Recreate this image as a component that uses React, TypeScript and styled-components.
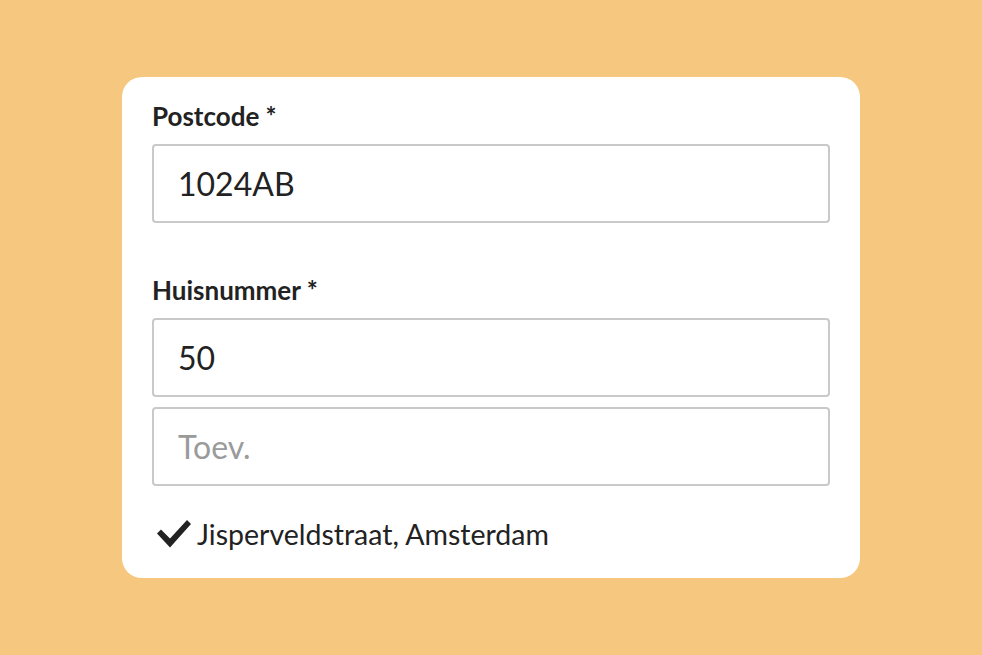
import styled, { createGlobalStyle } from 'styled-components'

const GlobalStyle = createGlobalStyle`
  html, body {
    margin: 0;
    padding: 0;
    background: #f6c77e;
  }
  body {
    font-family: Lato, 'Open Sans', sans-serif;
  }
`

const Page = styled.div`
  width: 982px;
  height: 655px;
  display: flex;
  align-items: center;
  justify-content: center;
  background: #f6c77e;
`

const Card = styled.form`
  width: 738px;
  box-sizing: border-box;
  padding: 23px 30px 27px;
  background: #ffffff;
  border-radius: 20px;
  display: flex;
  flex-direction: column;
`

const Field = styled.div<{ $spaced?: boolean }>`
  display: flex;
  flex-direction: column;
  gap: 12px;
  margin-top: ${({ $spaced }) => ($spaced ? '51px' : '0')};
`

const Label = styled.label`
  font-size: 26px;
  line-height: 32px;
  font-weight: 700;
  color: #222222;
`

const Input = styled.input`
  box-sizing: border-box;
  width: 100%;
  height: 79px;
  padding: 0 24px;
  border: 2px solid #c9c9c9;
  border-radius: 4px;
  font-family: Lato, 'Open Sans', sans-serif;
  font-size: 32px;
  color: #222222;
  background: #ffffff;
  outline: none;

  &::placeholder {
    color: #9a9a9a;
  }
`

const Stack = styled.div`
  display: flex;
  flex-direction: column;
  gap: 10px;
`

const Result = styled.div`
  display: flex;
  align-items: center;
  gap: 5px;
  margin-top: 31px;
  padding-left: 4px;
  font-size: 28.5px;
  line-height: 34px;
  color: #222222;
`

const CheckIcon = () => (
  <svg width="36" height="30" viewBox="0 0 36 30" aria-hidden="true">
    <path d="M1 14.5 L5 10.5 L14 19.5 L31 1 L35 5 L14 28.5 Z" fill="#222222" />
  </svg>
)

export default function App() {
  return (
    <>
      <GlobalStyle />
      <Page>
        <Card onSubmit={(e) => e.preventDefault()}>
          <Field>
            <Label htmlFor="postcode">Postcode *</Label>
            <Input id="postcode" defaultValue="1024AB" />
          </Field>
          <Field $spaced>
            <Label htmlFor="huisnummer">Huisnummer *</Label>
            <Stack>
              <Input id="huisnummer" defaultValue="50" />
              <Input placeholder="Toev." />
            </Stack>
          </Field>
          <Result>
            <CheckIcon />
            <span>Jisperveldstraat, Amsterdam</span>
          </Result>
        </Card>
      </Page>
    </>
  )
}
